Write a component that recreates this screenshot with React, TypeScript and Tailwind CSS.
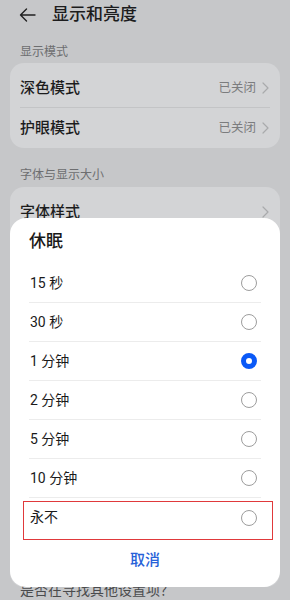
import React, { useState } from 'react';

const options = ['15 秒', '30 秒', '1 分钟', '2 分钟', '5 分钟', '10 分钟', '永不'];

const Chevron = () => (
  <svg width="7" height="12" viewBox="0 0 7 12" className="ml-1.5">
    <path d="M1 1l5 5-5 5" fill="none" stroke="#a9aaac" strokeWidth="1.2" strokeLinecap="round" strokeLinejoin="round" />
  </svg>
);

const SettingRow: React.FC<{ label: string; value?: string; divider?: boolean }> = ({ label, value, divider }) => (
  <div className="relative flex h-[40px] items-center justify-between pl-[10px] pr-[11px]">
    <span className="text-[15px] font-medium text-[#1c1c1d]">{label}</span>
    <div className="flex items-center">
      {value && <span className="text-[12.5px] text-[#7b7c7e]">{value}</span>}
      <Chevron />
    </div>
    {divider && <div className="absolute bottom-0 left-[10px] right-[10px] h-px bg-[#c3c4c6]" />}
  </div>
);

const Radio: React.FC<{ checked: boolean }> = ({ checked }) =>
  checked ? (
    <div className="h-4 w-4 rounded-full border-[5px] border-[#0a59f7] bg-white" />
  ) : (
    <div className="h-4 w-4 rounded-full border border-[#9d9d9d] bg-white" />
  );

export default function App() {
  const [selected, setSelected] = useState(2);

  return (
    <div
      className="relative h-[600px] w-[290px] overflow-hidden bg-[#c6c7c9]"
      style={{ fontFamily: 'Roboto, "Noto Sans CJK SC", sans-serif' }}
    >
      {/* page behind the dialog */}
      <div className="flex h-[28px] items-center pl-[19px] pt-[2px]">
        <svg width="17" height="14" viewBox="0 0 17 14">
          <path d="M16 7H1.5M7.5 1L1.5 7l6 6" fill="none" stroke="#202021" strokeWidth="1.4" strokeLinecap="round" strokeLinejoin="round" />
        </svg>
        <span className="ml-[16px] text-[17px] font-medium text-[#1c1c1d]">显示和亮度</span>
      </div>

      <div className="mt-[15px] pl-[20px] text-[12px] leading-[18px] text-[#6d6e70]">显示模式</div>
      <div className="mx-[10px] mt-[2px] rounded-[14px] bg-[#d3d4d6] pt-[5px]">
        <SettingRow label="深色模式" value="已关闭" divider />
        <SettingRow label="护眼模式" value="已关闭" />
      </div>

      <div className="mt-[18px] pl-[20px] text-[12px] leading-[18px] text-[#6d6e70]">字体与显示大小</div>
      <div className="mx-[10px] mt-[3px] h-[400px] rounded-[14px] bg-[#d3d4d6] pt-[5px]">
        <SettingRow label="字体样式" />
      </div>

      <div className="absolute left-[20px] top-[580px] text-[14px] text-[#4a4b4d]">是否在寻找其他设置项？</div>

      {/* dialog */}
      <div className="absolute left-[10px] top-[218px] flex h-[369px] w-[270px] flex-col rounded-[16px] bg-white">
        <div className="flex h-[46px] items-center pl-[19px] pt-[2px] text-[17px] font-medium text-[#191919]">休眠</div>
        <div className="px-[19px]">
          {options.map((opt, i) => (
            <button
              key={opt}
              onClick={() => setSelected(i)}
              className="flex h-[39px] w-full items-center justify-between border-b border-[#ececec] pl-px pr-[4px] text-left last:border-b-0"
            >
              <span className="text-[14px] text-[#1a1a1a]">{opt}</span>
              <Radio checked={selected === i} />
            </button>
          ))}
        </div>
        <div className="flex flex-1 items-center justify-center pb-[3px] text-[15px] font-medium text-[#2761d8]">取消</div>

        <div className="pointer-events-none absolute left-[13px] top-[283px] h-[39px] w-[250px] border-[1.5px] border-[#e0393b]" />
      </div>
    </div>
  );
}
